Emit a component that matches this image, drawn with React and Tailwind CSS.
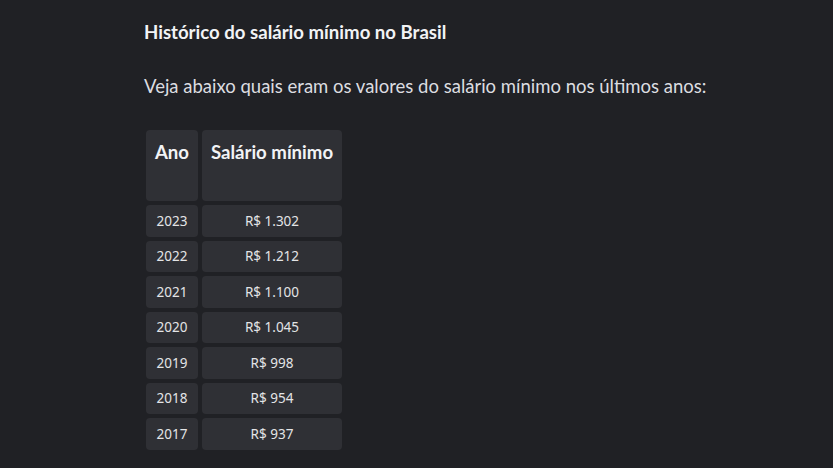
export default function App() {
  const rows = [
    ["2023", "R$ 1.302"],
    ["2022", "R$ 1.212"],
    ["2021", "R$ 1.100"],
    ["2020", "R$ 1.045"],
    ["2019", "R$ 998"],
    ["2018", "R$ 954"],
    ["2017", "R$ 937"],
  ];

  return (
    <div className="min-h-[468px] w-full bg-[#202125] font-['Lato',sans-serif] text-[#e3e4e6]">
      <div className="pl-[144px] pt-[20px]">
        <h2 className="text-[18.6px] font-bold leading-[24px] text-[#f2f3f5]">
          Histórico do salário mínimo no Brasil
        </h2>
        <p className="mt-[30px] text-[18.5px] leading-[24px] text-[#dcdde0]">
          Veja abaixo quais eram os valores do salário mínimo nos últimos anos:
        </p>
        <table className="-ml-[2px] mt-[28px] border-separate border-spacing-[4px]">
          <thead>
            <tr>
              <th className="h-[71px] w-[52px] rounded-[4px] bg-[#2f3035] px-1 pt-[11px] align-top text-[18.6px] font-bold leading-[22px] text-[#f2f3f5]">
                Ano
              </th>
              <th className="h-[71px] w-[140px] rounded-[4px] bg-[#2f3035] px-1 pt-[11px] align-top text-[18.6px] font-bold leading-[22px] text-[#f2f3f5]">
                Salário mínimo
              </th>
            </tr>
          </thead>
          <tbody className="font-['Noto_Sans',sans-serif] text-[13.5px]">
            {rows.map(([ano, valor]) => (
              <tr key={ano}>
                <td className="h-[31.5px] rounded-[4px] bg-[#2f3035] text-center align-middle">{ano}</td>
                <td className="h-[31.5px] rounded-[4px] bg-[#2f3035] text-center align-middle">{valor}</td>
              </tr>
            ))}
          </tbody>
        </table>
      </div>
    </div>
  );
}
